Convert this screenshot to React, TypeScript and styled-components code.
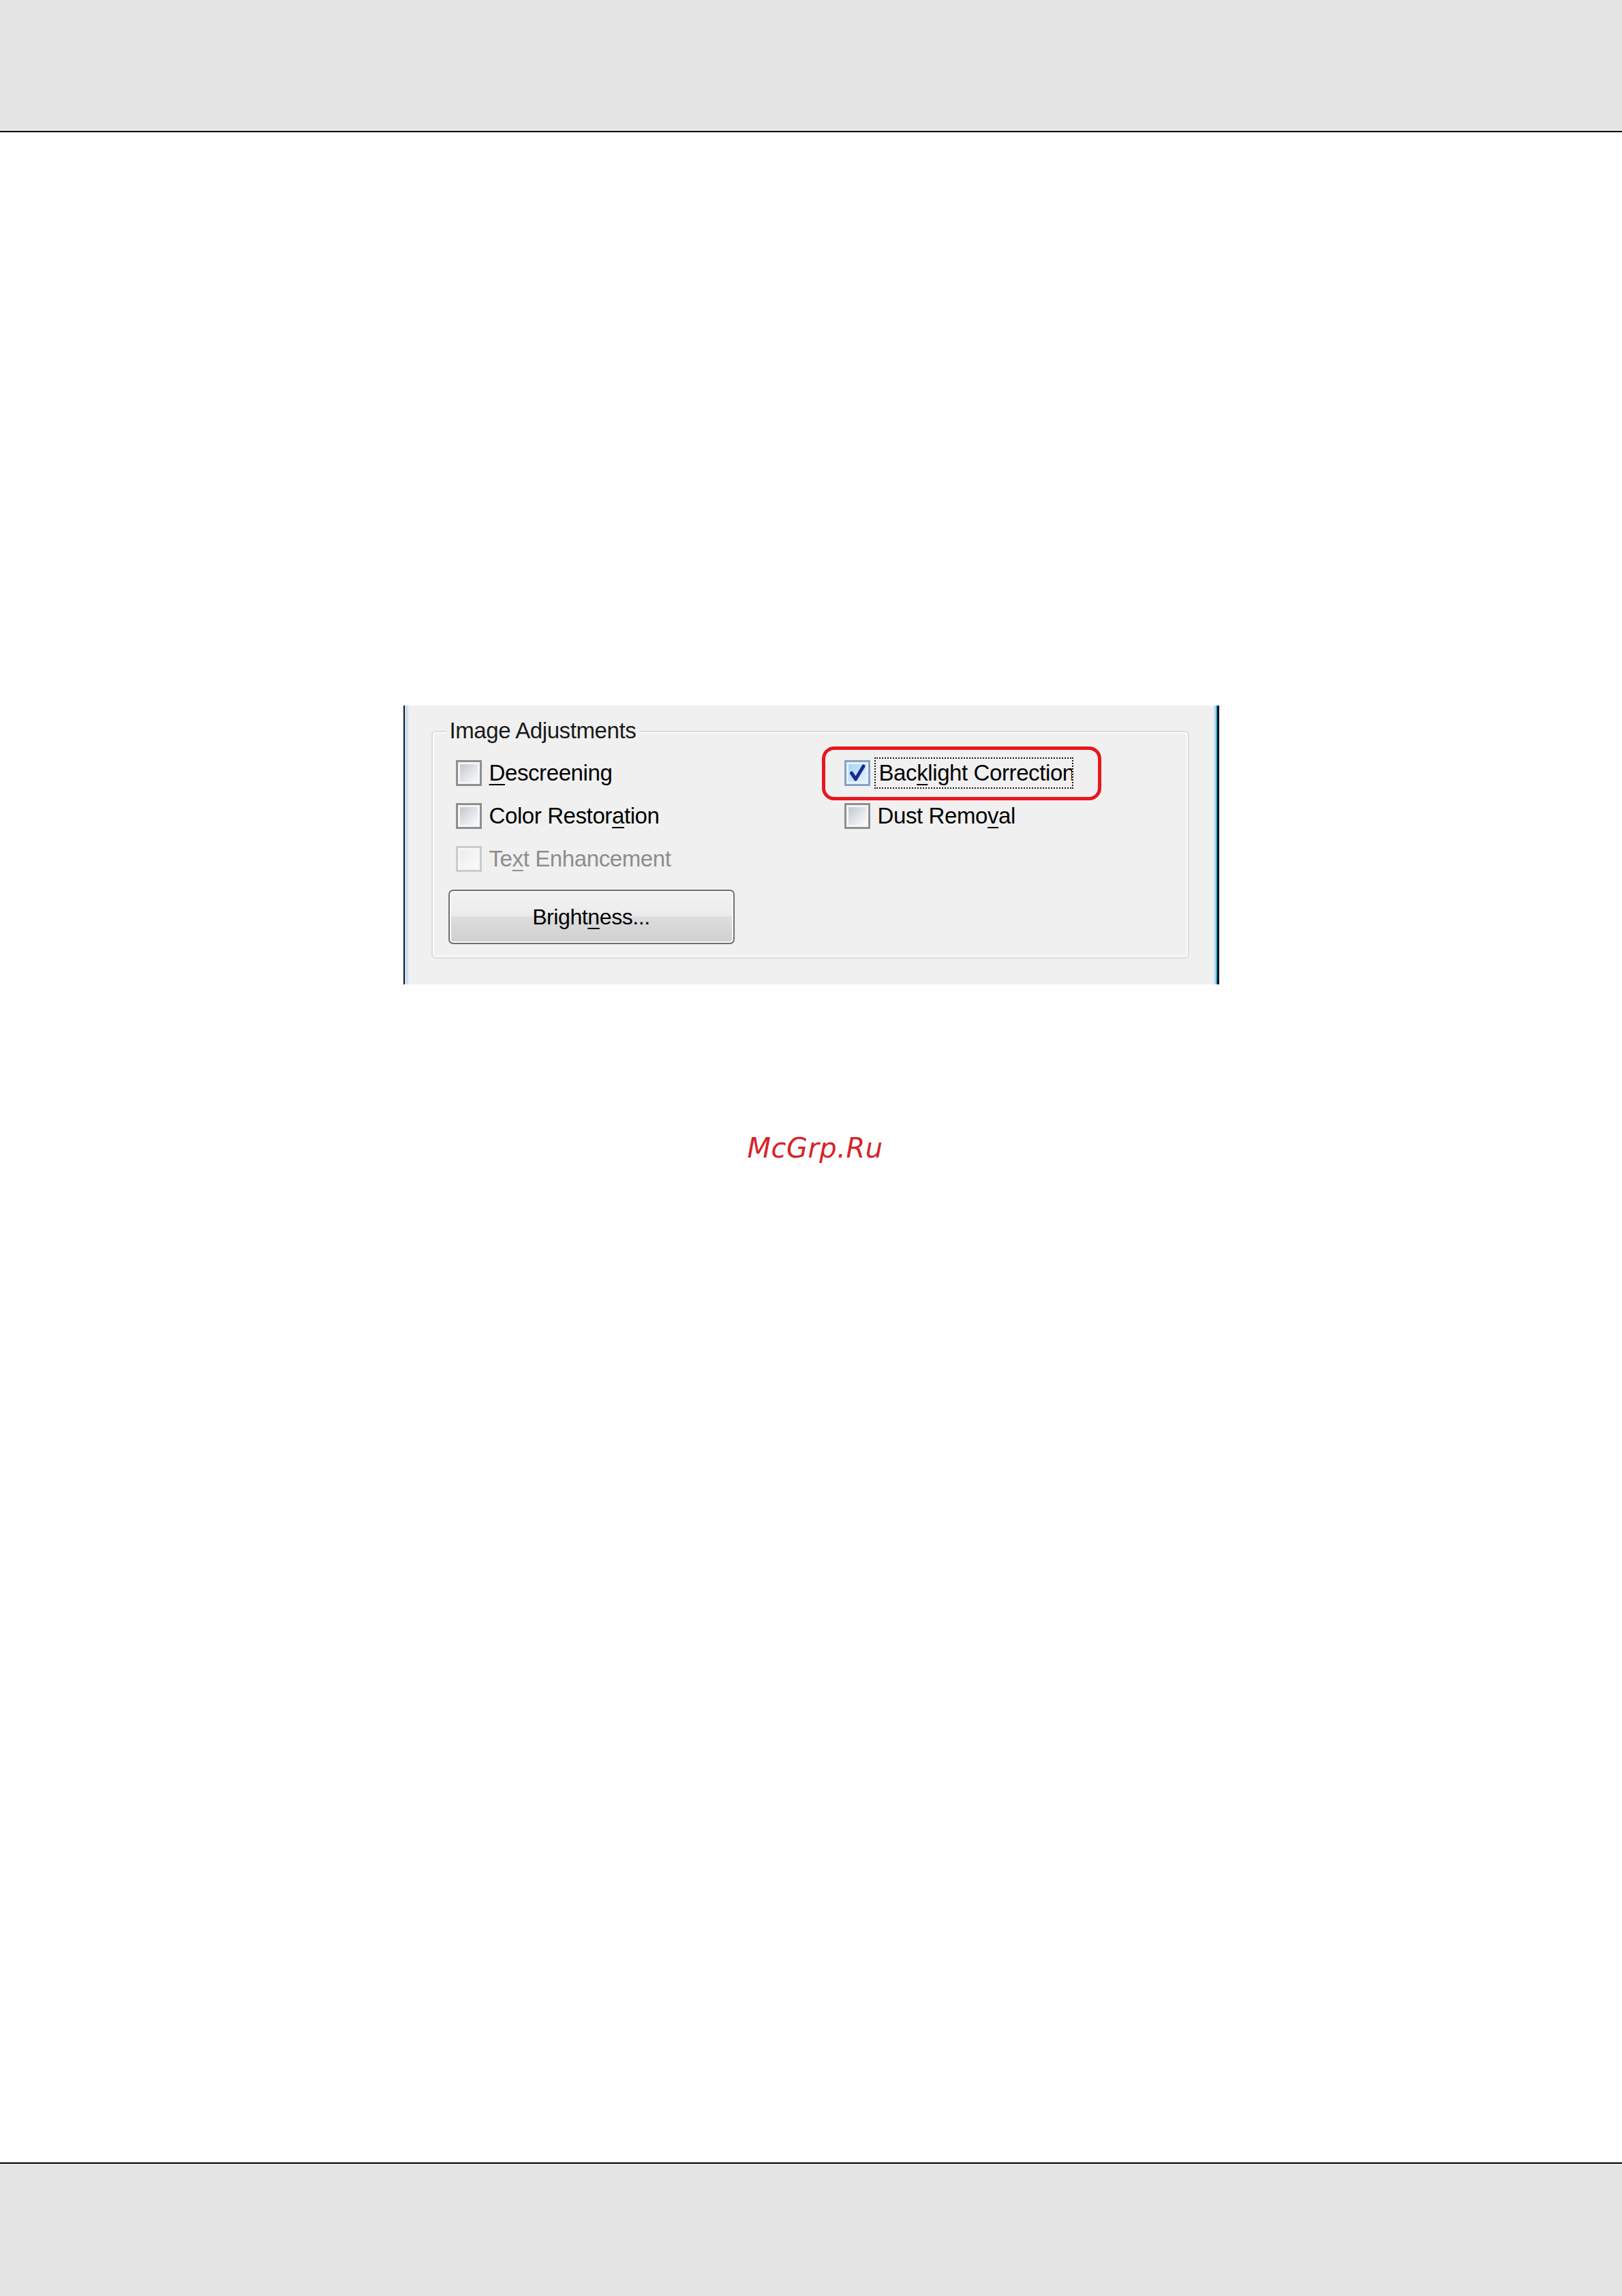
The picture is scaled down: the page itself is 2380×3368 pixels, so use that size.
import { createGlobalStyle, styled } from "styled-components";

const GlobalStyle = createGlobalStyle`
  html, body {
    margin: 0;
    padding: 0;
    background: #fefefe;
  }
  body {
    font-family: "Liberation Sans", Arial, sans-serif;
  }
`;

type BoxState = "off" | "on" | "disabled";

interface OptionProps {
  label: string;
  mnemonic: number;
  state?: BoxState;
  focused?: boolean;
}

const options: OptionProps[] = [
  { label: "Descreening", mnemonic: 0 },
  { label: "Color Restoration", mnemonic: 12 },
  { label: "Text Enhancement", mnemonic: 2, state: "disabled" },
  { label: "Backlight Correction", mnemonic: 3, state: "on", focused: true },
  { label: "Dust Removal", mnemonic: 9 },
];

const Mnemonic = ({ label, mnemonic }: { label: string; mnemonic: number }) => (
  <>
    {label.slice(0, mnemonic)}
    <Key>{label[mnemonic]}</Key>
    {label.slice(mnemonic + 1)}
  </>
);

const CheckOption = ({ label, mnemonic, state = "off", focused }: OptionProps) => (
  <Option>
    <Box $state={state}>
      <Fill $state={state}>
        {state === "on" && (
          <svg width="26" height="26" viewBox="0 0 26 26">
            <path
              d="M4.5 13 L10.5 22 L22 3"
              fill="none"
              stroke="#1a2a8c"
              strokeWidth="5"
              strokeLinejoin="round"
              strokeLinecap="round"
            />
          </svg>
        )}
      </Fill>
    </Box>
    {focused ? (
      <FocusLabel>
        <Mnemonic label={label} mnemonic={mnemonic} />
      </FocusLabel>
    ) : (
      <Label $disabled={state === "disabled"}>
        <Mnemonic label={label} mnemonic={mnemonic} />
      </Label>
    )}
  </Option>
);

const App = () => {
  return (
    <Page>
      <GlobalStyle />
      <TopBand />
      <Content>
        <Dialog>
          <GroupBox>
            <Legend>Image Adjustments</Legend>
            <OptionGrid>
              {options.map((o) => (
                <CheckOption key={o.label} {...o} />
              ))}
            </OptionGrid>
            <PushButton>
              <Mnemonic label="Brightness..." mnemonic={6} />
            </PushButton>
          </GroupBox>
          <Highlight />
        </Dialog>
        <Watermark>McGrp.Ru</Watermark>
      </Content>
      <BottomBand />
    </Page>
  );
};

export default App;

const Page = styled.div`
  display: flex;
  flex-direction: column;
  min-height: 3368px;
`;

const TopBand = styled.div`
  height: 192px;
  background: #e5e5e5;
  border-bottom: 2px solid #000;
`;

const BottomBand = styled.div`
  height: 194px;
  background: #e5e5e5;
  border-top: 2px solid #000;
`;

const Content = styled.main`
  flex: 1;
  display: flex;
  flex-direction: column;
  align-items: center;
  padding-top: 841px;
`;

const Dialog = styled.div`
  position: relative;
  box-sizing: border-box;
  width: 1197px;
  height: 409px;
  padding: 37px 41px 0 39px;
  background: #f0f0f0;
  border-left: 2px solid #151515;
  border-right: 3px solid #0a0a0a;
  box-shadow:
    inset -2px 0 0 #2cb0e0,
    inset -5px 0 0 #c9dff0,
    inset 5px 0 0 #cddff0;
`;

const GroupBox = styled.div`
  position: relative;
  padding: 41px 20px 19px 34px;
  border: 2px solid #d5dfe5;
  border-radius: 6px;
  box-shadow: inset 0 0 0 2px #fbfbfb;
`;

const Legend = styled.span`
  position: absolute;
  top: -20px;
  left: 20px;
  padding: 0 5px;
  background: #f0f0f0;
  font-size: 33px;
  line-height: 36px;
  letter-spacing: -0.4px;
  color: #1a1a1a;
  white-space: nowrap;
`;

const OptionGrid = styled.div`
  display: grid;
  grid-auto-flow: column;
  grid-template-columns: 570px 1fr;
  grid-template-rows: repeat(3, 38px);
  row-gap: 25px;
`;

const Option = styled.div`
  display: flex;
  align-items: center;
  gap: 11px;
`;

const Box = styled.span<{ $state: BoxState }>`
  box-sizing: border-box;
  width: 38px;
  height: 38px;
  padding: 3px;
  flex-shrink: 0;
  border: 3px solid
    ${(p) => (p.$state === "on" ? "#86a3c6" : p.$state === "disabled" ? "#cbcbcb" : "#8e8f8f")};
  background: ${(p) => (p.$state === "on" ? "#e6f3fd" : "#f6f6f6")};
`;

const Fill = styled.span<{ $state: BoxState }>`
  display: flex;
  align-items: center;
  justify-content: center;
  width: 100%;
  height: 100%;
  background: ${(p) =>
    p.$state === "on"
      ? "linear-gradient(135deg, #a9d4f6 0%, #cbe6fb 60%, #e4f2fd 100%)"
      : p.$state === "disabled"
      ? "linear-gradient(135deg, #ececec 0%, #fbfbfb 100%)"
      : "linear-gradient(135deg, #c3c8d0 0%, #e2e5e9 55%, #fbfbfb 100%)"};
`;

const Label = styled.span<{ $disabled?: boolean }>`
  font-size: 33px;
  line-height: 38px;
  letter-spacing: -0.4px;
  white-space: nowrap;
  color: ${(p) => (p.$disabled ? "#8d8d8d" : "#000")};
`;

const FocusLabel = styled.span`
  box-sizing: border-box;
  display: flex;
  align-items: center;
  width: 292px;
  height: 46px;
  margin-left: -5px;
  padding-left: 5px;
  overflow: hidden;
  border: 2px dotted #1a1a1a;
  font-size: 33px;
  letter-spacing: -0.4px;
  white-space: nowrap;
  color: #000;
`;

const Key = styled.u`
  text-decoration-thickness: 2px;
  text-underline-offset: 5px;
`;

const PushButton = styled.button`
  display: block;
  box-sizing: border-box;
  width: 420px;
  height: 80px;
  margin: 26px 0 0 -11px;
  padding: 0;
  border: 2px solid #707070;
  border-radius: 7px;
  background: linear-gradient(#f3f3f3 0%, #ebebeb 48%, #dddddd 50%, #cfcfcf 100%);
  box-shadow: inset 0 0 0 2px #fafafa;
  font-family: "Liberation Sans", Arial, sans-serif;
  font-size: 32px;
  letter-spacing: -0.4px;
  color: #000;
`;

// red marker drawn over the checked option
const Highlight = styled.div`
  position: absolute;
  top: 60px;
  left: 612px;
  box-sizing: border-box;
  width: 410px;
  height: 79px;
  border: 5px solid #e8161d;
  border-radius: 18px;
  pointer-events: none;
`;

const Watermark = styled.div`
  margin-top: 216px;
  padding-left: 12px;
  font-family: "DejaVu Sans", Verdana, sans-serif;
  font-style: italic;
  font-size: 40px;
  line-height: 48px;
  letter-spacing: 0.5px;
  color: #d7232a;
`;
